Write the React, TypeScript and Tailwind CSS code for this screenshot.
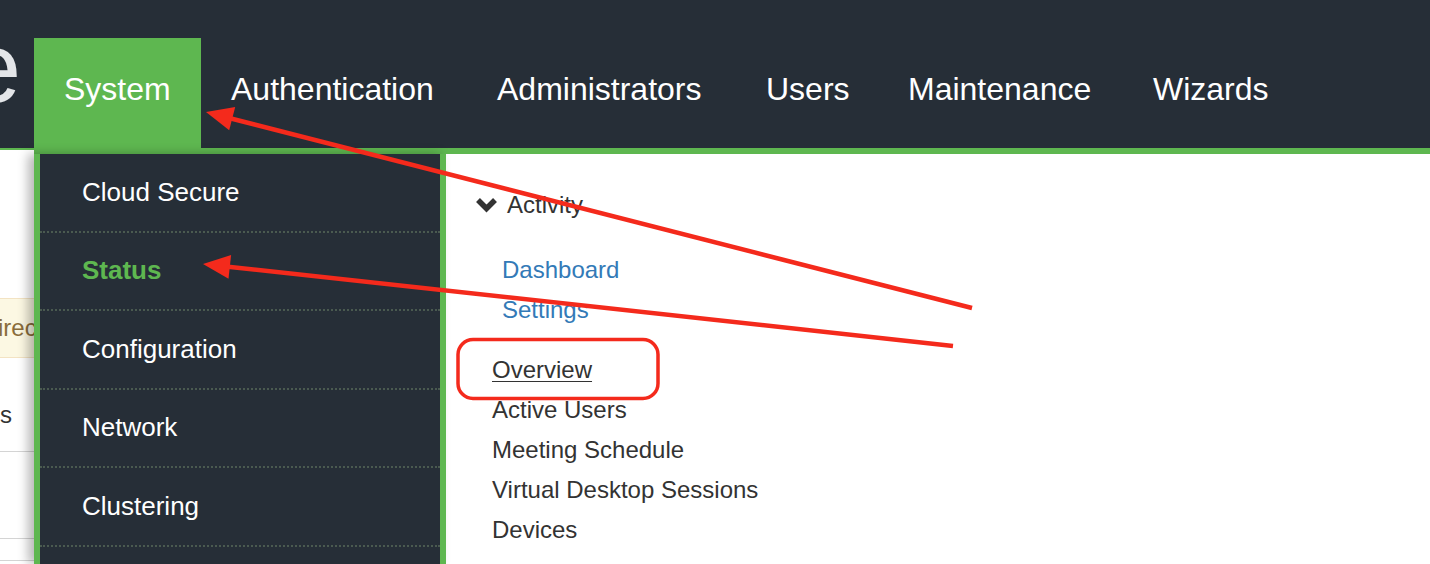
import React from "react";

const tabs = [
  { label: "System", w: "w-[167px]", active: true },
  { label: "Authentication", w: "w-[266px]", active: false },
  { label: "Administrators", w: "w-[269px]", active: false },
  { label: "Users", w: "w-[142px]", active: false },
  { label: "Maintenance", w: "w-[245px]", active: false },
  { label: "Wizards", w: "w-[174px]", active: false },
];

const menu = [
  { label: "Cloud Secure", active: false },
  { label: "Status", active: true },
  { label: "Configuration", active: false },
  { label: "Network", active: false },
  { label: "Clustering", active: false },
];

const statusLinks = ["Active Users", "Meeting Schedule", "Virtual Desktop Sessions", "Devices"];

export default function App() {
  return (
    <div className="relative w-[1430px] h-[564px] overflow-hidden bg-white [font-family:'Liberation_Sans',Arial,sans-serif]">
      {/* Header */}
      <header className="h-[148px] bg-[#262e37] flex items-end">
        <div className="w-[34px] h-full overflow-hidden flex justify-end items-start pt-[17px] pr-[13px]">
          <span className="text-[100px] leading-none text-[#e3e5e8] whitespace-nowrap">e</span>
        </div>
        <nav className="flex h-[110px]">
          {tabs.map((t) => (
            <div
              key={t.label}
              className={`${t.w} h-full pl-[30px] pt-[33px] text-[32px] leading-[37px] text-white whitespace-nowrap ${
                t.active ? "bg-[#5eb750]" : ""
              }`}
            >
              {t.label}
            </div>
          ))}
        </nav>
      </header>

      {/* Body */}
      <div className="flex h-[416px]">
        {/* Left background page strip */}
        <div className="w-[34px] shrink-0 border-t-2 border-[#5eb750] overflow-hidden text-[24px]">
          <div className="mt-[148px] h-[60px] bg-[#fcf8e3] border-y border-[#f3e3c3] flex items-center whitespace-nowrap text-[#8a6d3b]">
            <span className="-ml-[2px]">irected</span>
          </div>
          <div className="mt-[37px] leading-[40px] text-[#333] whitespace-nowrap">s</div>
          <div className="mt-[16px] border-t border-[#d4d4d4]" />
          <div className="mt-[86px] border-t border-[#d4d4d4]" />
          <div className="mt-[21px] border-t border-[#d4d4d4]" />
        </div>

        <div className="flex-1 flex border-t-[6px] border-[#5eb750]">
          {/* Dropdown menu */}
          <div className="relative z-10 w-[412px] shrink-0 bg-[#262e37] border-x-[6px] border-[#5eb750] shadow-[-6px_0_10px_rgba(0,0,0,0.28)]">
            {menu.map((m) => (
              <div
                key={m.label}
                className="h-[78.5px] flex items-center pl-[42px] border-b-2 border-dotted border-[#4a5a50]"
              >
                <span
                  className={`text-[26px] ${m.active ? "text-[#5eb750] font-bold" : "text-white"}`}
                >
                  {m.label}
                </span>
              </div>
            ))}
          </div>

          {/* Content */}
          <div className="flex-1 pt-[31px] text-[24px] leading-[40px] text-[#333]">
            <div className="flex items-center pl-[28px]">
              <svg width="25" height="18" viewBox="0 0 25 18" className="mr-[8px]">
                <polyline
                  points="4,4 12.5,12.5 21,4"
                  fill="none"
                  stroke="#333"
                  strokeWidth="5.5"
                  strokeLinejoin="miter"
                />
              </svg>
              <span>Activity</span>
            </div>
            <div className="mt-[25px] pl-[56px] text-[#337ab7]">
              <div>Dashboard</div>
              <div>Settings</div>
            </div>
            <div className="mt-[20px] pl-[46px]">
              <div className="underline underline-offset-[3px] decoration-1">Overview</div>
              {statusLinks.map((s) => (
                <div key={s}>{s}</div>
              ))}
            </div>
          </div>
        </div>
      </div>

      {/* Annotation overlay */}
      <svg
        className="absolute left-0 top-0 z-20 pointer-events-none"
        width="1430"
        height="564"
        viewBox="0 0 1430 564"
      >
        <line x1="972" y1="308" x2="230" y2="118.3" stroke="#f42a1c" strokeWidth="4.5" />
        <polygon points="206,112 235.2,107.1 229.2,130.3" fill="#f42a1c" />
        <line x1="953" y1="346" x2="228" y2="266.7" stroke="#f42a1c" strokeWidth="4.5" />
        <polygon points="203,264 231.1,255 228.5,278.8" fill="#f42a1c" />
        <rect
          x="458"
          y="339.5"
          width="200"
          height="59"
          rx="15"
          ry="15"
          fill="none"
          stroke="#f42a1c"
          strokeWidth="3.5"
        />
      </svg>
    </div>
  );
}
